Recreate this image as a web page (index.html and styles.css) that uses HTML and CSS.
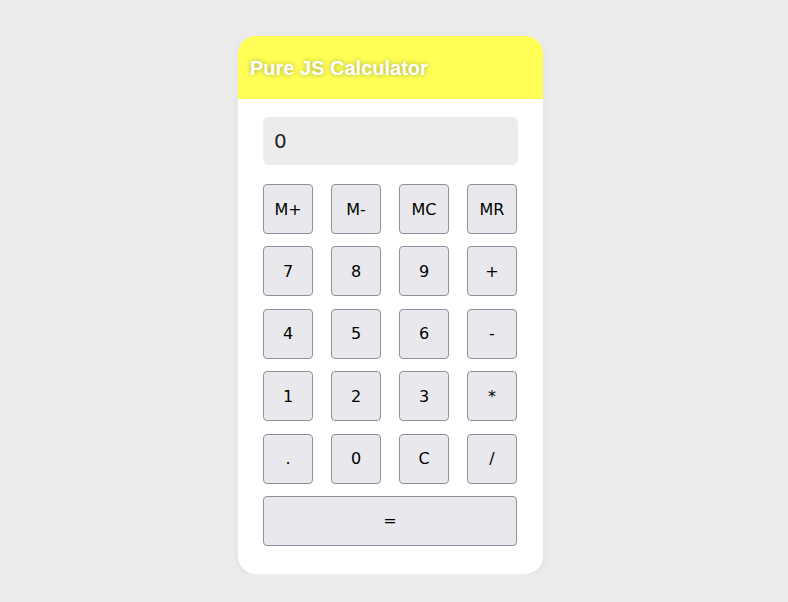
FILE: index.html
```html
<!DOCTYPE html>
<html>
<head>
<meta charset="utf-8">
<link rel="stylesheet" href="styles.css">
</head>
<body>
<div class="calc">
  <div class="header"><h1 class="title">Pure JS Calculator</h1></div>
  <div class="body">
    <div class="display">0</div>
    <div class="keys">
      <button class="key">M+</button>
      <button class="key">M-</button>
      <button class="key">MC</button>
      <button class="key">MR</button>
      <button class="key">7</button>
      <button class="key">8</button>
      <button class="key">9</button>
      <button class="key">+</button>
      <button class="key">4</button>
      <button class="key">5</button>
      <button class="key">6</button>
      <button class="key">-</button>
      <button class="key">1</button>
      <button class="key">2</button>
      <button class="key">3</button>
      <button class="key">*</button>
      <button class="key">.</button>
      <button class="key">0</button>
      <button class="key">C</button>
      <button class="key">/</button>
      <button class="key key-wide">=</button>
    </div>
  </div>
</div>
</body>
</html>
```

FILE: styles.css
```css
html, body {
  margin: 0;
  padding: 0;
}
body {
  background: #ececec;
  font-family: "DejaVu Sans", sans-serif;
  display: flex;
  justify-content: center;
  padding-top: 36px;
  padding-right: 7px;
}
.calc {
  width: 305px;
  background: #ffffff;
  border-radius: 18px;
  box-shadow: 0 2px 8px rgba(0, 0, 0, 0.06);
  overflow: hidden;
}
.header {
  background: #ffff55;
  height: 63px;
  display: flex;
  align-items: center;
  padding-left: 12px;
}
.title {
  margin: 0;
  font-family: "Liberation Sans", Arial, sans-serif;
  font-weight: bold;
  font-size: 20px;
  color: #ffffff;
  text-shadow: 0 0 5px rgba(130, 130, 60, 0.7);
  padding-top: 2px;
}
.body {
  padding: 18px 25px 28px 25px;
}
.display {
  height: 48px;
  background: #ececec;
  border-radius: 6px;
  display: flex;
  align-items: center;
  padding-left: 11px;
  font-size: 20px;
  color: #222;
}
.keys {
  margin-top: 19px;
  display: grid;
  grid-template-columns: repeat(4, 50px);
  column-gap: 18px;
  row-gap: 12.4px;
}
.key {
  height: 50px;
  width: 50px;
  margin: 0;
  padding: 0;
  background: #e9e9ed;
  border: 1px solid #8f8f9d;
  border-radius: 4px;
  font-family: "DejaVu Sans", sans-serif;
  font-size: 16px;
  color: #000;
}
.key-wide {
  grid-column: 1 / 5;
  width: auto;
}
```
